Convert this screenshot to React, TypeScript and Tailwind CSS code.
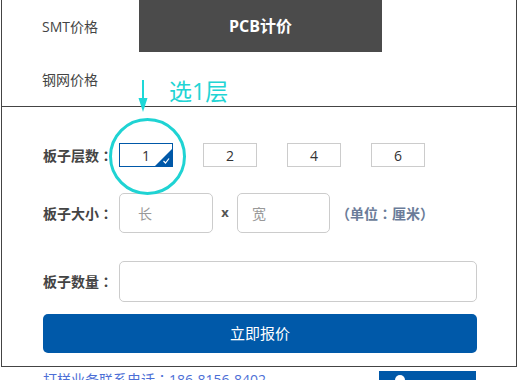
import React from 'react';

const layers = ['1', '2', '4', '6'];

// centred full-width punctuation, as the reference font draws it
function Punct(props: { children: string }) {
    return <span className="font-['Noto_Sans_CJK_JP',sans-serif]">{props.children}</span>;
}

function Label(props: { text: string }) {
    return (
        <div className="w-[76px] text-[14px] font-bold text-[#444]">
            {props.text}
            <Punct>：</Punct>
        </div>
    );
}

function LayerBox(props: { value: string; active?: boolean }) {
    if (props.active) {
        return (
            <div className="relative flex h-[24px] w-[54px] items-center justify-center border border-[#0058a8] bg-white text-[14px] text-[#333]">
                {props.value}
                <svg className="absolute bottom-0 right-0" width="17" height="17" viewBox="0 0 17 17">
                    <polygon points="17,0 17,17 0,17" fill="#0058a8" />
                    <path d="M8.5 12 L10.5 14 L14 9.5" fill="none" stroke="#fff" strokeWidth="1.2" />
                </svg>
            </div>
        );
    }
    return (
        <div className="flex h-[24px] w-[54px] items-center justify-center border border-[#cccccc] bg-white text-[14px] text-[#333]">
            {props.value}
        </div>
    );
}

export default function App() {
    return (
        <div className="relative h-[380px] w-[522px] overflow-hidden bg-white font-['Open_Sans','Noto_Sans_CJK_SC',sans-serif]">
            <div className="ml-px w-[516px] border-x border-b border-[#444]">
                {/* tabs */}
                <div className="flex h-[107px] border-b border-[#444]">
                    <div className="flex w-[137px] flex-col pl-[40px] text-[14px] text-[#444]">
                        <div className="flex h-[52px] items-center">SMT价格</div>
                        <div className="flex h-[54px] items-center">钢网价格</div>
                    </div>
                    <div className="flex h-[52px] w-[243px] items-center justify-center bg-[#4b4b4b] text-[16px] font-bold text-white">
                        PCB计价
                    </div>
                </div>

                {/* form */}
                <div className="pl-[41px] pr-[39px] pt-[36px] pb-[13px]">
                    <div className="flex items-center">
                        <Label text="板子层数" />
                        <div className="flex gap-[30px]">
                            {layers.map((l, i) => (
                                <LayerBox key={l} value={l} active={i === 0} />
                            ))}
                        </div>
                    </div>

                    <div className="mt-[26px] flex items-center">
                        <Label text="板子大小" />
                        <div className="flex h-[40px] w-[94px] items-center rounded-[5px] border border-[#cccccc] pl-[18px] text-[14px] text-[#999]">长</div>
                        <div className="w-[24px] text-center text-[13px] font-bold text-[#555]">x</div>
                        <div className="flex h-[40px] w-[93px] items-center rounded-[5px] border border-[#cccccc] pl-[14px] text-[14px] text-[#999]">宽</div>
                        <div className="ml-[6px] text-[14px] font-bold text-[#6b7c99]">
                            <Punct>（</Punct>单位<Punct>：</Punct>厘米<Punct>）</Punct>
                        </div>
                    </div>

                    <div className="mt-[28px] flex items-center">
                        <Label text="板子数量" />
                        <div className="h-[41px] flex-1 rounded-[5px] border border-[#cccccc]" />
                    </div>

                    <div className="mt-[12px] flex h-[39px] items-center justify-center rounded-[5px] bg-[#0059a9] text-[15px] text-white">
                        立即报价
                    </div>
                </div>
            </div>

            {/* footer */}
            <div className="mt-[3px] flex items-start pl-[43px]">
                <div className="w-[336px] text-[14px] leading-[18px] text-[#4d6fd6]">
                    打样业务联系电话<Punct>：</Punct>186-8156-8402
                </div>
                <div className="relative mt-[1px] h-[20px] w-[97px] bg-[#0058a8]">
                    <div className="absolute left-[16px] top-[4px] h-[10px] w-[10px] rounded-full bg-white" />
                </div>
            </div>

            {/* annotation overlay */}
            <svg className="absolute left-[137px] top-[80px]" width="12" height="33" viewBox="0 0 12 33">
                <line x1="6" y1="0" x2="6" y2="22" stroke="#1ed8d8" strokeWidth="2" />
                <polygon points="1.5,18 10.5,18 6,32" fill="#1ed8d8" />
            </svg>
            <div className="absolute left-[169px] top-[76px] text-[23px] leading-[30px] text-[#22d4d4]">选1层</div>
            <div className="absolute left-[109px] top-[118px] h-[77px] w-[77px] rounded-full border-[3px] border-[#1fd3d3]" />
        </div>
    );
}
